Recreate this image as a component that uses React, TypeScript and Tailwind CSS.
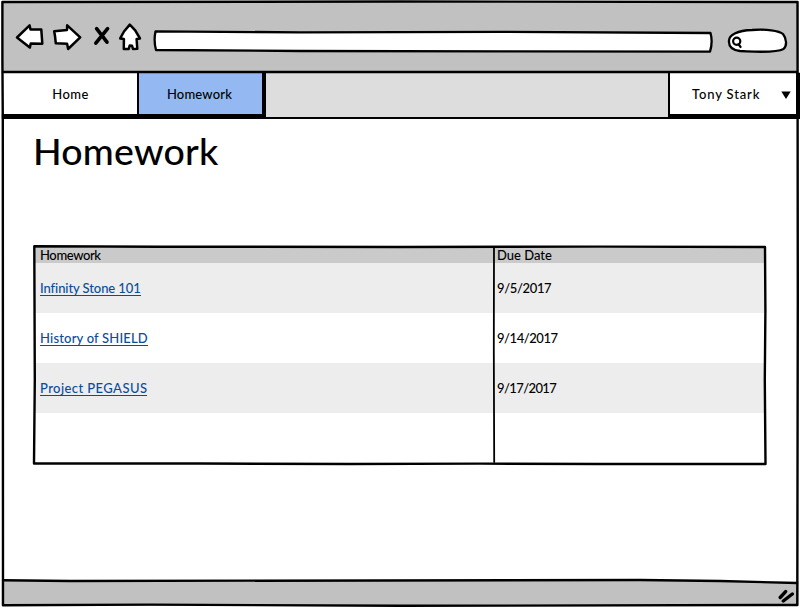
import React from "react";

const line = { fill: "none", stroke: "#000", strokeLinecap: "round", strokeLinejoin: "round" } as const;

const homework = [
  { title: "Infinity Stone 101", due: "9/5/2017", titleClass: "tracking-[-0.09px]", dueClass: "tracking-[-0.35px]" },
  { title: "History of SHIELD", due: "9/14/2017", titleClass: "tracking-[0.18px]", dueClass: "tracking-[-0.45px]" },
  { title: "Project PEGASUS", due: "9/17/2017", titleClass: "tracking-[0.42px]", dueClass: "tracking-[-0.6px]" },
];

function NavIcons() {
  return (
    <svg className="block h-[34px] w-[130px] shrink-0" viewBox="14 20 130 34">
      <g {...line} strokeWidth="2.5" fill="#fff">
        <path d="M17 37.5 L29.6 25.4 L30.5 29.4 L41.3 29.6 L42.3 43.7 L30.8 43.4 L29.8 47.6 Z" />
        <path d="M54.2 31.2 L67 29.9 L67.2 25.3 L80.2 37.4 L68.1 49 L67.1 43.8 L55.8 43.3 L55 36 Z" />
        <path d="M129.8 24.6 L135.2 30.4 L140 38.5 L136.6 39 L137.3 48.8 L133 49 L132 45.7 L129.7 45.5 L128.7 49 L123.8 49 L123.9 39 L120.2 38.4 L124 31.5 Z" />
      </g>
      <path d="M96.6 28.6 L107 42.2 M107.6 28.6 L95.8 43.2" {...line} strokeWidth="3.6" />
    </svg>
  );
}

function Toolbar() {
  return (
    <header className="flex h-[73px] items-start bg-[#c1c1c1] pl-[14px] pt-5">
      <NavIcons />
      <svg className="mt-[9px] block h-6 w-[562px] shrink-0 ml-2" viewBox="152 29 562 24">
        <path d="M155.5 31.4 L300 32.3 L500 31.8 L710.5 33 Q713 42 710 51.7 L500 51.3 L300 51 L156 50 Q153.5 41 155.5 31.4 Z" {...line} fill="#fff" strokeWidth="2.3" />
      </svg>
      <svg className="mt-[7px] ml-[11px] block h-7 w-[64px] shrink-0" viewBox="725 27 64 28">
        <path d="M729 42 C728 34 739 30.5 752 30 C766 29 779 30.5 783 34 C787 39 787 46 783.5 49 C775 53.5 753 51.5 740 51 C732 50 729 47 729 42 Z" {...line} fill="#fff" strokeWidth="2.3" />
        <circle cx="736.7" cy="41.3" r="3.6" {...line} strokeWidth="2.2" />
        <path d="M738.5 44.3 L740.6 47" {...line} strokeWidth="2.2" />
      </svg>
    </header>
  );
}

function NavBar() {
  return (
    <nav className="flex h-[46px] border-b-2 border-black bg-[#ddd] text-[13px] font-medium">
      <div className="flex h-[45px] w-[139px] items-center justify-center border-r-2 border-b-4 border-black bg-white pl-1 pt-[3px]">
        <span className="tracking-[0.45px]">Home</span>
      </div>
      <div className="flex h-[45px] w-[127px] items-center justify-center border-r-[4px] border-b-4 border-black bg-[#94b9f2] pt-[3px] pr-0.5">
        <span className="tracking-[0.18px]">Homework</span>
      </div>
      <div className="ml-auto flex h-[45px] w-[132px] items-center border-r-[4px] border-b-4 border-l-2 border-black bg-white pl-[22px] pt-[3px]">
        <span className="whitespace-nowrap tracking-[0.85px]">Tony Stark</span>
        <svg className="ml-auto mr-[5px] block h-2 w-[10px]" viewBox="0 0 10 8"><path d="M0.3 0.4 H9.7 L5 8 Z" /></svg>
      </div>
    </nav>
  );
}

function HomeworkTable() {
  return (
    <section className="relative ml-[33px] h-[220px] w-[734px] px-[2px] pt-[3px] text-[13px] font-medium">
      <div className="grid h-[15px] grid-cols-[459px_271px] bg-[#cacaca] leading-[15px]">
        <div className="pl-[5px]"><span className="tracking-[-0.38px]">Homework</span></div>
        <div className="pl-[3px]"><span>Due Date</span></div>
      </div>
      {homework.map((item, i) => (
        <div key={item.title} className={`grid h-[50px] grid-cols-[459px_271px] items-center ${i % 2 === 0 ? "bg-[#ededed]" : "bg-white"}`}>
          <div className="flex pl-[5px]">
            <a className={`block h-4 border-b border-[#0b4c99] leading-[16px] text-[#0b4c99] ${item.titleClass}`}>{item.title}</a>
          </div>
          <div className="pl-[3px] pt-[2px]"><span className={item.dueClass}>{item.due}</span></div>
        </div>
      ))}
      <svg className="pointer-events-none absolute inset-0 h-full w-full overflow-visible" viewBox="33 245 734 220">
        <path d="M34.3 246.3 L160 246.7 L400 247 L600 246.6 L765 247 L765.4 310 L764.8 380 L765.5 464 L600 464 L480 463.6 L350 464 L200 463.5 L34 463.5 L34.8 380 Z" {...line} strokeWidth="2.4" />
        <path d="M494 247 L493.8 350 L494.2 462" {...line} strokeWidth="1.8" />
      </svg>
    </section>
  );
}

export default function App() {
  return (
    <div className="relative flex h-[608px] w-[800px] flex-col overflow-hidden bg-white font-['Lato',sans-serif] text-black">
      <Toolbar />
      <NavBar />
      <main className="flex-1">
        <h1 className="ml-[33px] mt-[9px] h-[47px] text-[37.5px] leading-[46px] font-medium tracking-[0.2px]">Homework</h1>
        <div className="h-[70px]" />
        <HomeworkTable />
      </main>
      <footer className="flex h-[27px] items-start justify-end bg-[#c1c1c1] pr-1 pt-2">
        <svg className="block h-4 w-[18px]" viewBox="778 588 18 16">
          <path d="M780.2 596.5 L785.6 590.6 M783.3 600 L792.3 593" {...line} strokeWidth="3.4" />
        </svg>
      </footer>
      <svg className="pointer-events-none absolute inset-0 h-full w-full" viewBox="0 0 800 608">
        <path d="M0 0 H1.8 V608 H0 Z M798.5 0 H800 V72 H798.5 Z M798.5 119 H800 V608 H798.5 Z M0 606 H800 V608 H0 Z M0 0 H800 V1 H0 Z" fill="#fff" />
        <path d="M3 580.5 L640 580 L720 581.2 L797 583 V576 H3 Z" fill="#fff" />
        <path d="M2.4 2 L400 1.5 L797.5 2 L797.8 300 L797.3 605 L400 605.8 L150 604.6 L3 605.2 L2.8 119 L2.4 60 Z" {...line} strokeWidth="2.4" />
        <path d="M3 72 H797 M3 580.3 L70 581 L640 580 L720 581 L797 583" {...line} strokeWidth="2.4" />
      </svg>
    </div>
  );
}
